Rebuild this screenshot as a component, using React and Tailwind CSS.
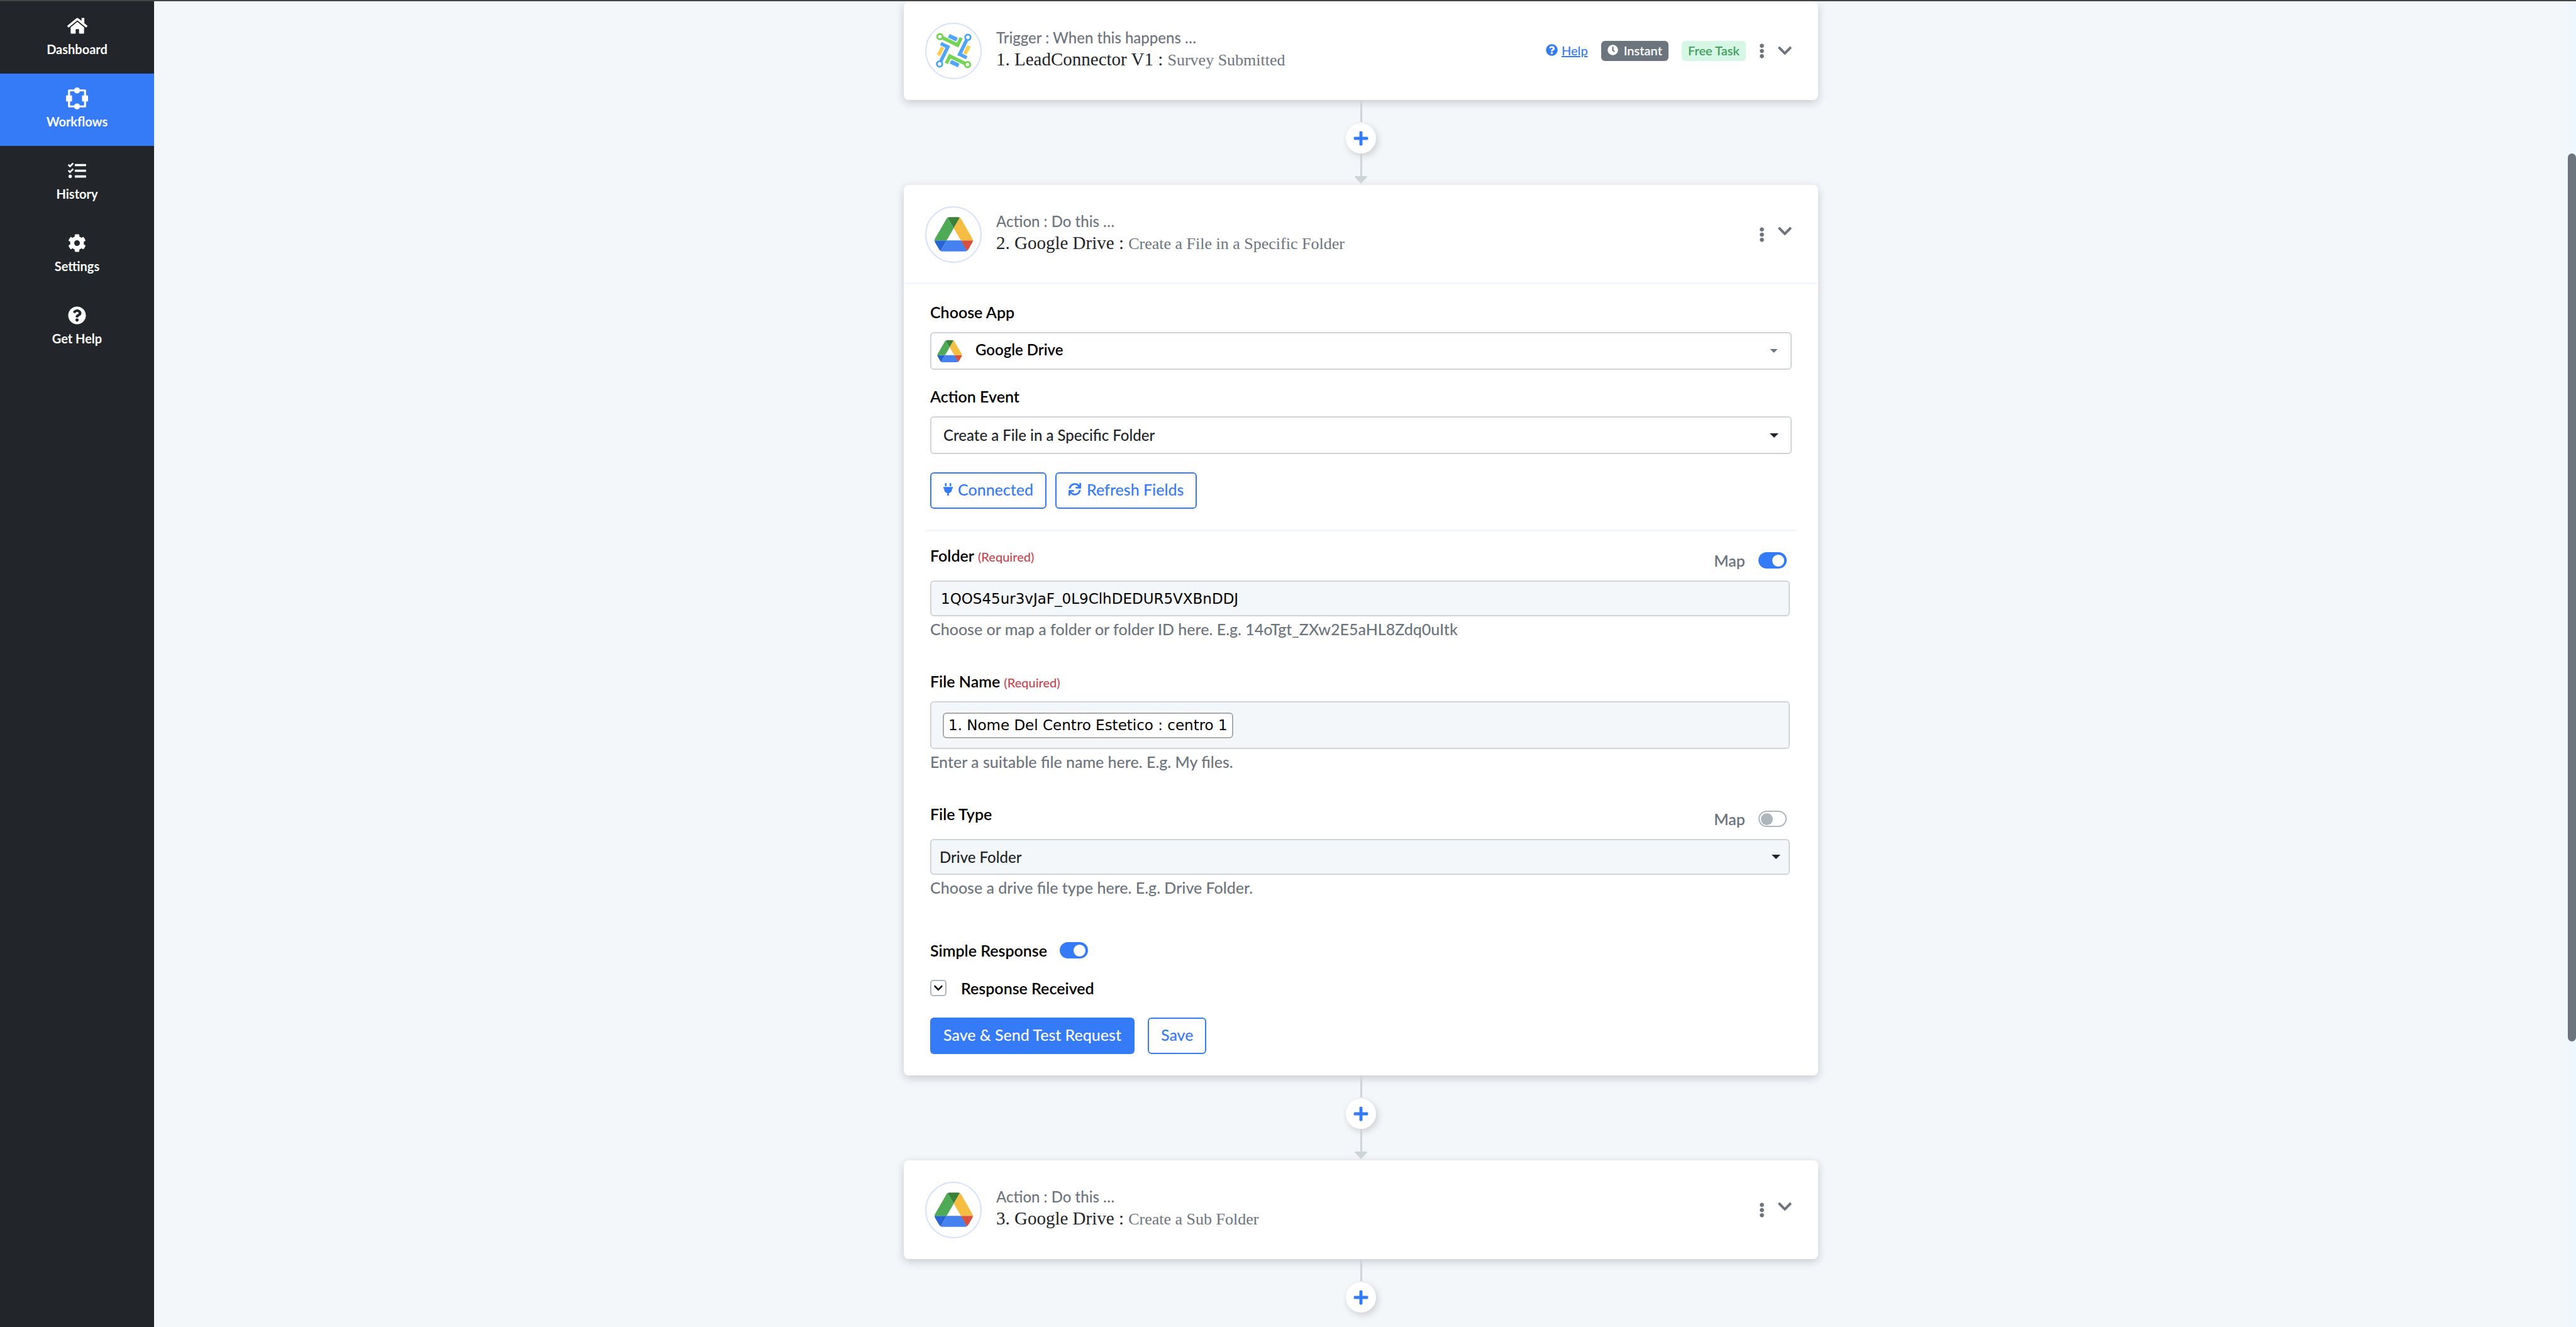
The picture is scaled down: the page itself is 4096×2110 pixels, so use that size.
// src/pages/WorkflowEditor.jsx
import { useState } from "react";
import clsx from "clsx";
import {
    FaHome,
    FaTasks,
    FaCog,
    FaQuestionCircle,
    FaClock,
    FaEllipsisV,
    FaChevronDown,
    FaPlus,
    FaPlug,
    FaSync
} from "react-icons/fa";

const WorkflowIcon = ({ className }) => (
    <svg viewBox="0 0 44 44" className={className} fill="currentColor" aria-hidden="true">
        <rect x="6" y="6" width="32" height="32" fill="none" stroke="currentColor" strokeWidth="4" strokeLinejoin="round" />
        <circle cx="22" cy="6" r="6" />
        <circle cx="22" cy="38" r="6" />
        <rect x="0" y="16" width="12" height="12" />
        <rect x="32" y="16" width="12" height="12" />
    </svg>
);

const DriveLogo = ({ className }) => (
    <svg viewBox="0 0 87.3 78" className={className} aria-hidden="true">
        <path fill="#2764d3" d="m6.6 66.85 3.85 6.65c.8 1.4 1.95 2.5 3.3 3.3l13.75-23.8h-27.5c0 1.55.4 3.1 1.2 4.5z" />
        <path fill="#4faa55" d="m43.65 25-13.75-23.8c-1.35.8-2.5 1.9-3.3 3.3l-25.4 44a9.06 9.06 0 0 0 -1.2 4.5h27.5z" />
        <path fill="#d85140" d="m73.55 76.8c1.35-.8 2.5-1.9 3.3-3.3l1.6-2.75 7.65-13.25c.8-1.4 1.2-2.95 1.2-4.5h-27.502l5.852 11.5z" />
        <path fill="#398038" d="m43.65 25 13.75-23.8c-1.35-.8-2.9-1.2-4.5-1.2h-18.5c-1.6 0-3.15.45-4.5 1.2z" />
        <path fill="#4582f0" d="m59.8 53h-32.3l-13.75 23.8c1.35.8 2.9 1.2 4.5 1.2h50.8c1.6 0 3.15-.45 4.5-1.2z" />
        <path fill="#f5bd42" d="m73.4 26.5-12.7-22c-.8-1.4-1.95-2.5-3.3-3.3l-13.75 23.8 16.15 28h27.45c0-1.55-.4-3.1-1.2-4.5z" />
    </svg>
);

// one half of the pinwheel, the other half is the same shapes turned by 180deg
const PinwheelHalf = () => (
    <>
        <path d="M120 131L216 177L237 134" fill="none" stroke="#74d455" strokeWidth="21" />
        <circle cx="111" cy="127" r="16" fill="#fff" stroke="#74d455" strokeWidth="11" />
        <path d="M272 142L228 232L270 252" fill="none" stroke="#51a4f7" strokeWidth="21" />
        <circle cx="277" cy="131" r="16" fill="#fff" stroke="#51a4f7" strokeWidth="11" />
        <path d="M168 111L217 134L207 155L159 133Z" fill="#51a4f7" />
        <path d="M273 177L294 187L268 235L249 226Z" fill="#f8cf52" />
    </>
);

const LeadConnectorLogo = ({ className }) => (
    <svg viewBox="83 100 220 220" className={className} aria-hidden="true">
        <PinwheelHalf />
        <g transform="rotate(180 193 210)">
            <PinwheelHalf />
        </g>
    </svg>
);

const Caret = ({ className }) => (
    <svg viewBox="0 0 14 7" className={className} fill="currentColor" aria-hidden="true">
        <path d="M0 0H14L7 7Z" />
    </svg>
);

const navItems = [
    { label: "Dashboard", icon: <FaHome className="size-8" /> },
    { label: "Workflows", icon: <WorkflowIcon className="size-[35px]" />, active: true },
    { label: "History", icon: <FaTasks className="size-[29px]" /> },
    { label: "Settings", icon: <FaCog className="size-[29px]" /> },
    { label: "Get Help", icon: <FaQuestionCircle className="size-[29px]" /> }
];

const Sidebar = () => (
    <nav className="w-[245px] shrink-0 bg-[#22262b] text-white">
        {navItems.map((item) => (
            <a
                key={item.label}
                href="#"
                className={clsx("flex h-[115px] flex-col items-center pt-[23px]", item.active && "bg-[#357af6]")}
            >
                <span className="flex h-8 items-center justify-center">{item.icon}</span>
                <span className="mt-[7px] text-[20px] leading-[28px] font-bold">{item.label}</span>
            </a>
        ))}
    </nav>
);

const StepHeader = ({ logo, kind, title, event, badges }) => (
    <div className="flex min-h-[153px] items-center pr-[40px] pl-[32px]">
        <div className="flex size-[90px] shrink-0 items-center justify-center rounded-full border-2 border-[#d6e2fd]">
            {logo}
        </div>
        <div className="ml-[23px] flex flex-1 flex-col gap-[3px] pb-[2px]">
            <p className="text-[24px] leading-[28px] font-medium text-[#6c757d]">{kind}</p>
            <h2 className="font-['Liberation_Serif',serif] text-[29px] leading-[34px] text-[#212529]">
                {title} : <span className="text-[26px] text-[#6c757d]">{event}</span>
            </h2>
        </div>
        <div className="flex items-center gap-[21px] text-[#6c757d]">
            {badges && (
                <>
                    <a href="#" className="flex items-center gap-[6px] pb-[2px] text-[20px] leading-[28px] font-medium text-[#357af6]">
                        <FaQuestionCircle className="size-[19px]" />
                        <span className="underline">Help</span>
                    </a>
                    <span className="flex h-8 items-center gap-[9px] rounded-[6px] bg-[#6c757d] px-[10px] pb-[2px] text-[20px] leading-[28px] font-semibold text-white">
                        <FaClock className="size-[17px]" />
                        Instant
                    </span>
                    <span className="flex h-8 items-center rounded-[6px] bg-[#d6f7e5] px-[10px] pb-[2px] text-[20px] leading-[28px] font-semibold text-[#41a05c]">
                        Free Task
                    </span>
                </>
            )}
            <button type="button" aria-label="Step options">
                <FaEllipsisV className="h-6 w-[9px]" />
            </button>
            <button type="button" aria-label="Toggle step" className={clsx(!badges && "pb-[10px]")}>
                <FaChevronDown className="h-[25px] w-[22px]" />
            </button>
        </div>
    </div>
);

const StepCard = ({ children, ...header }) => (
    <section className="w-full rounded-[8px] border-2 border-white bg-white shadow-[0_4px_14px_rgba(20,20,43,0.2)]">
        <StepHeader {...header} />
        {children}
    </section>
);

const Connector = ({ last }) => (
    <div className="flex flex-col items-center text-[#ced4d9]">
        <span className="h-[35px] w-[3px] bg-current" />
        <button
            type="button"
            aria-label="Add step"
            className="mt-[2px] flex size-[48px] items-center justify-center rounded-full bg-white text-[#357af6] shadow-[3px_4px_12px_rgba(0,0,0,0.16)]"
        >
            <FaPlus className="size-[26px]" />
        </button>
        {!last && (
            <>
                <span className="h-[36px] w-[3px] bg-current" />
                <svg viewBox="0 0 20 12" className="mb-[2px] h-[12px] w-[20px]" fill="currentColor" aria-hidden="true">
                    <path d="M1 0H19Q20.5 .6 19.5 2L11 11Q10 12.4 9 11L.5 2Q-.5 .6 1 0Z" />
                </svg>
            </>
        )}
    </div>
);

const Switch = (props) => (
    <input
        type="checkbox"
        role="switch"
        className="flex h-[26px] w-[45px] shrink-0 appearance-none items-center rounded-full border-2 border-[#adb5bd] bg-white px-[2px] before:size-[19px] before:rounded-full before:bg-[#adb5bd] checked:border-[#357af6] checked:bg-[#357af6] checked:before:ml-auto checked:before:bg-white"
        {...props}
    />
);

const Label = ({ htmlFor, required, children }) => (
    <label htmlFor={htmlFor} className="block text-[25px] leading-[28px] font-semibold text-black">
        {children}
        {required && <span className="ml-[6px] text-[20px] leading-[20px] font-medium text-[#ca444b]">(Required)</span>}
    </label>
);

const Hint = ({ children }) => (
    <p className="mt-[6px] text-[25px] leading-[28px] font-medium text-[#6c757d]">{children}</p>
);

const MapSwitch = ({ id, checked, onChange }) => (
    <div className="flex items-center gap-[21px] pt-[8px] pr-[5px]">
        <label htmlFor={id} className="text-[25px] leading-[28px] font-semibold text-[#6c757d]">
            Map
        </label>
        <Switch id={id} checked={checked} onChange={(e) => onChange(e.target.checked)} />
    </div>
);

const outlineButton =
    "flex h-[58px] items-center rounded-[6px] border-2 border-[#357af6] px-[19px] pb-[4px] text-[25px] leading-[28px] font-medium text-[#357af6]";

const ActionForm = () => {
    const [folder, setFolder] = useState("1QOS45ur3vJaF_0L9ClhDEDUR5VXBnDDJ");
    const [mapFolder, setMapFolder] = useState(true);
    const [mapType, setMapType] = useState(false);
    const [simple, setSimple] = useState(true);

    return (
        <>
            <hr className="h-[3px] border-0 bg-[#f0f6fe]" />
            <form className="px-[40px] pt-[30px] pb-[32px]" onSubmit={(e) => e.preventDefault()}>
                <Label htmlFor="app">Choose App</Label>
                <div className="relative mt-[18px]">
                    <DriveLogo className="absolute top-[13px] left-[11px] h-[35px] w-[40px]" />
                    <select
                        id="app"
                        className="h-[60px] w-full appearance-none rounded-[6px] border-2 border-[#ced4da] bg-transparent pb-[5px] pl-[70px] text-[24px] font-semibold text-black"
                    >
                        <option>Google Drive</option>
                    </select>
                    <Caret className="absolute top-[27px] right-[22px] h-[6px] w-[13px] text-[#6c757d]" />
                </div>

                <div className="mt-[28px]">
                    <Label htmlFor="event">Action Event</Label>
                </div>
                <div className="relative mt-[18px]">
                    <select
                        id="event"
                        className="h-[60px] w-full appearance-none rounded-[6px] border-2 border-[#ced4da] bg-white pl-[19px] text-[24px] font-medium text-[#212529]"
                    >
                        <option>Create a File in a Specific Folder</option>
                    </select>
                    <Caret className="absolute top-[27px] right-[21px] h-[7px] w-[14px] text-[#212529]" />
                </div>

                <div className="mt-[29px] flex gap-[14px]">
                    <button type="button" className={outlineButton}>
                        <FaPlug className="mr-[8px] h-[20px] w-[15px]" />
                        Connected
                    </button>
                    <button type="button" className={outlineButton}>
                        <FaSync className="mr-[9px] size-[20px]" />
                        Refresh Fields
                    </button>
                </div>

                <hr className="-mx-[8px] mt-[33px] h-[3px] border-0 bg-[#f0f5fe]" />

                <div className="pr-[3px]">
                    {/* Folder */}
                    <div className="mt-[24px] flex justify-between">
                        <Label htmlFor="folder" required>Folder</Label>
                        <MapSwitch id="map-folder" checked={mapFolder} onChange={setMapFolder} />
                    </div>
                    <input
                        id="folder"
                        type="text"
                        value={folder}
                        onChange={(e) => setFolder(e.target.value)}
                        className="mt-[18px] block h-[57px] w-full rounded-[6px] border-2 border-[#ced4da] bg-[#f3f7fa] px-[15px] font-['DejaVu_Sans',sans-serif] text-[23px] text-black"
                    />
                    <Hint>Choose or map a folder or folder ID here. E.g. 14oTgt_ZXw2E5aHL8Zdq0uItk</Hint>

                    {/* File name */}
                    <div className="mt-[55px]">
                        <Label htmlFor="file-name" required>File Name</Label>
                    </div>
                    <div className="mt-[18px] flex h-[76px] items-center rounded-[6px] border-2 border-[#ced4da] bg-[#f3f7fa] px-[18px] font-['DejaVu_Sans',sans-serif] text-[23px] text-black">
                        <span className="rounded-[6px] border-2 border-[#ababab] bg-white px-[7px] leading-[37px]">
                            1. Nome Del Centro Estetico : centro 1
                        </span>
                        <input id="file-name" type="text" className="ml-[4px] min-w-0 flex-1 bg-transparent outline-none" />
                    </div>
                    <Hint>Enter a suitable file name here. E.g. My files.</Hint>

                    {/* File type */}
                    <div className="mt-[55px] flex justify-between">
                        <Label htmlFor="file-type">File Type</Label>
                        <MapSwitch id="map-type" checked={mapType} onChange={setMapType} />
                    </div>
                    <div className="relative mt-[18px]">
                        <select
                            id="file-type"
                            className="block h-[57px] w-full appearance-none rounded-[6px] border-2 border-[#ced4da] bg-[#f3f7fa] pl-[13px] text-[24px] font-medium text-[#212529]"
                        >
                            <option>Drive Folder</option>
                        </select>
                        <Caret className="absolute top-[25px] right-[15px] h-[7px] w-[14px] text-[#212529]" />
                    </div>
                    <Hint>Choose a drive file type here. E.g. Drive Folder.</Hint>
                </div>

                <div className="mt-[72px] flex items-center gap-[20px]">
                    <Label htmlFor="simple">Simple Response</Label>
                    <Switch id="simple" checked={simple} onChange={(e) => setSimple(e.target.checked)} />
                </div>

                <button type="button" className="mt-[32px] flex items-center gap-[23px] text-[25px] leading-[28px] font-semibold text-black">
                    <span className="flex size-[26px] items-center justify-center rounded-[5px] border-2 border-[#adb5bd]">
                        <FaChevronDown className="size-[16px]" />
                    </span>
                    Response Received
                </button>

                <div className="mt-[33px] flex gap-[21px]">
                    <button
                        type="submit"
                        className="flex h-[58px] items-center rounded-[6px] bg-[#357af6] px-[21px] pb-[4px] text-[25px] leading-[28px] font-medium text-white"
                    >
                        Save &amp; Send Test Request
                    </button>
                    <button type="button" className={outlineButton}>Save</button>
                </div>
            </form>
        </>
    );
};

const App = () => (
    <div className="flex h-screen overflow-hidden border-t-2 border-[#444444] bg-[#f3f7fa] font-[Lato,sans-serif]">
        <Sidebar />
        <main className="flex min-w-0 flex-1 flex-col items-center">
            <div className="w-full max-w-[1454px]">
                <StepCard
                    logo={<LeadConnectorLogo className="size-[59px]" />}
                    kind="Trigger : When this happens …"
                    title="1. LeadConnector V1"
                    event="Survey Submitted"
                    badges
                />
                <Connector />
                <StepCard
                    logo={<DriveLogo className="h-[55px] w-[61px]" />}
                    kind="Action : Do this …"
                    title="2. Google Drive"
                    event="Create a File in a Specific Folder"
                >
                    <ActionForm />
                </StepCard>
                <Connector />
                <StepCard
                    logo={<DriveLogo className="h-[55px] w-[61px]" />}
                    kind="Action : Do this …"
                    title="3. Google Drive"
                    event="Create a Sub Folder"
                />
                <Connector last />
            </div>
        </main>
        {/* scroll track */}
        <div className="w-[13px] shrink-0 bg-[#eff6fe]">
            <div className="mt-[242px] h-[67%] rounded-full bg-[#6c757d]" />
        </div>
    </div>
);

export default App;
